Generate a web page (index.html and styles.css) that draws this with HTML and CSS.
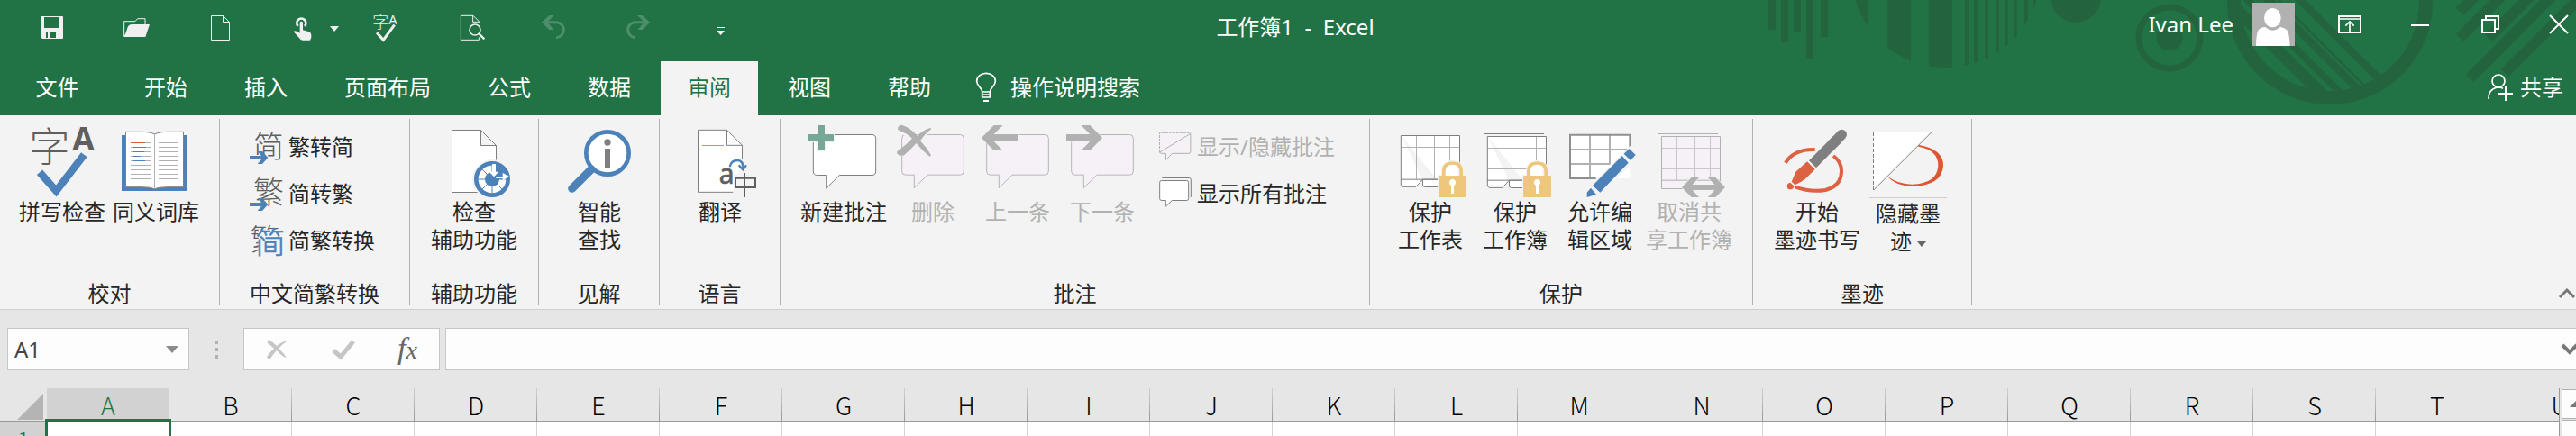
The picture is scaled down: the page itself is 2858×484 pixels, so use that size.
FILE: index.html
```html
<!DOCTYPE html>
<html lang="zh-CN">
<head>
<meta charset="utf-8">
<title>工作簿1 - Excel</title>
<link rel="stylesheet" href="styles.css">
</head>
<body>
<header class="app-header">
  <svg class="decor" width="898" height="128" viewBox="1960 0 898 128" aria-hidden="true">
    <defs>
      <clipPath id="disc"><circle cx="2159" cy="-30" r="105"/></clipPath>
      <clipPath id="ring"><circle cx="2585" cy="2" r="106"/></clipPath>
    </defs>
    <path d="M1962 0h8v33h-8zM1976 0h8v47h-8zM1990 0h8v35h-8zM2004 0h8v65h-8zM2020 0h8v41h-8z"/>
    <path clip-path="url(#disc)" d="M2050 0h22v80h-22zM2094 0h26v80h-26zM2140 0h26v80h-26zM2180 0h4v80h-4zM2190 0h4v80h-4zM2202 0h4v80h-4zM2214 0h4v80h-4zM2224 0h4v80h-4zM2234 0h4v80h-4zM2246 0h4v80h-4zM2256 0h4v80h-4z"/>
    <circle cx="2303" cy="-3" r="28"/>
    <circle cx="2407" cy="42" r="14.5"/>
    <circle class="decor-line" cx="2407" cy="42" r="34" stroke-width="7"/>
    <circle class="decor-line" cx="2585" cy="2" r="106.500" stroke-width="15"/>
    <g clip-path="url(#ring)">
      <path d="M2462 0l120 120h19L2480 0zM2488 0l120 120h11L2499 0zM2511 0l120 120h12L2523 0zM2526 0l120 120h4L2530 0zM2546 0l120 120h12L2558 0z"/>
    </g>
    <path class="decor-line" stroke-width="12" d="M2729 13l20-20M2729 42l50-50M2761 42l50-50M2740 87l100-100M2779 81l90-90"/>
  </svg>

  <div class="titlebar">
    <div class="qat" role="toolbar" aria-label="快速访问工具栏">
      <button type="button" aria-label="保存"><svg class="q" viewBox="117 42 108 108"><path fill="#f0f0f0" fill-rule="evenodd" d="M135 57q0-3 3-3h69q3 0 3 3v69q0 3-3 3h-66l-6-6zM147 57v36h51V57zM153 105v21h6v-18h9v18h18v-21z"/></svg></button>
      <button type="button" aria-label="打开"><svg class="q" viewBox="399 42 108 108"><path fill="none" stroke="#f0f0f0" stroke-width="3" d="M413 121V71h37l8-9h25v20"/><path fill="#f0f0f0" d="M412 123q8-14 12-30 3-12 16-12h58l-14 42z"/></svg></button>
      <button type="button" aria-label="新建"><svg class="q" viewBox="681 42 108 108"><path fill="none" stroke="#f0f0f0" stroke-width="3" d="M703.500 52.500h39l21 21v60h-60zM742.500 52.500v21h21"/></svg></button>
      <span class="split">
        <button type="button" aria-label="触摸/鼠标模式"><svg class="q" viewBox="954 42 108 108"><path fill="none" stroke="#f0f0f0" stroke-width="8" d="M992 87a15 15 0 1 1 22 0"/><path fill="#f0f0f0" d="M998 74q5-5 10 0v26l21 6q7 3 7 11v8l-4 9h-25q-7-1-12-9l-18-19q3-6 11-2l10 6z"/></svg></button>
        <button type="button" aria-label="更多模式"><svg width="10" height="6" viewBox="0 0 10 6"><path fill="#f0f0f0" d="M0 0h10L5 6z"/></svg></button>
      </span>
      <button type="button" aria-label="拼写检查"><svg class="q" viewBox="1230 42 108 108"><text class="glyph-zh" x="1240" y="93" font-size="54" fill="#f0f0f0">字</text><text class="glyph-en" x="1294" y="81" font-size="44" fill="#f0f0f0">A</text><path fill="none" stroke="#f0f0f0" stroke-width="9" d="M1254 109l22 24 37-50"/></svg></button>
      <button type="button" aria-label="打印预览"><svg class="q" viewBox="81 42 108 108"><path fill="none" stroke="#f0f0f0" stroke-width="3" d="M154 124v9H94V52h41l20 20v6M134 52v21h20"/><circle cx="141" cy="99" r="18" fill="#217346" stroke="#f0f0f0" stroke-width="5"/><path stroke="#f0f0f0" stroke-width="7" d="M153 111l19 19"/></svg></button>
      <button type="button" aria-label="撤消" disabled><svg class="q" viewBox="351 42 108 108"><path fill="none" stroke="#4d8f6b" stroke-width="9" d="M372 74h40a24 25 0 0 1-1 51"/><path fill="#4d8f6b" d="M363 74l25-23h16l-22 23 22 25h-16z"/></svg></button>
      <button type="button" aria-label="恢复" disabled><svg class="q" viewBox="630 42 108 108"><path fill="none" stroke="#4d8f6b" stroke-width="9" d="M714 74h-40a24 25 0 0 0 1 51"/><path fill="#4d8f6b" d="M723 74l-25-23h-16l22 23-22 25h16z"/></svg></button>
      <button type="button" aria-label="自定义快速访问工具栏"><svg class="q" viewBox="906 42 108 108"><path fill="#fff" d="M945 90h27v3h-27zM945 102h27l-13 15z"/></svg></button>
    </div>
    <h1 class="title">工作簿1&nbsp; -&nbsp; Excel</h1>
    <div class="window-side">
      <span class="user">Ivan Lee</span>
      <svg class="avatar" width="48" height="48" viewBox="0 0 144 144" role="img" aria-label="Ivan Lee"><path fill="#b1b1b1" d="M0 0h144v144H0z"/><ellipse cx="70" cy="50" rx="28" ry="32" fill="#fff"/><path fill="#fff" d="M15 144q1-50 12-57 9-7 19-6 24 22 50 0 12 1 21 9 9 8 11 54z"/></svg>
      <button class="wbtn" type="button" aria-label="功能区显示选项"><svg width="28" height="22" viewBox="645 48 84 66"><path fill="none" stroke="#fff" stroke-width="6" d="M651 54h72v54h-72z"/><path fill="none" stroke="#fff" stroke-width="5" d="M651 63h72M687 105V72M673 86l14-14 14 14"/></svg></button>
      <button class="wbtn" type="button" aria-label="最小化"><svg width="20" height="22" viewBox="0 0 20 22"><path fill="#fff" d="M0 11h20v2H0z"/></svg></button>
      <button class="wbtn" type="button" aria-label="向下还原"><svg width="20" height="20" viewBox="0 0 20 20"><path fill="none" stroke="#fff" stroke-width="2" d="M1 5h14v14H1zM5 5V1h14v14h-4"/></svg></button>
      <button class="wbtn close" type="button" aria-label="关闭"><svg width="20" height="20" viewBox="0 0 20 20"><path stroke="#fff" stroke-width="2" d="M0 0l20 20M20 0L0 20"/></svg></button>
    </div>
  </div>

  <nav class="tabs" aria-label="功能区选项卡">
    <button class="tab file" type="button">文件</button>
    <button class="tab" type="button">开始</button>
    <button class="tab" type="button">插入</button>
    <button class="tab" type="button">页面布局</button>
    <button class="tab" type="button">公式</button>
    <button class="tab" type="button">数据</button>
    <button class="tab active" type="button">审阅</button>
    <button class="tab" type="button">视图</button>
    <button class="tab" type="button">帮助</button>
    <button class="tellme" type="button"><svg width="24" height="34" viewBox="366 246 72 102"><path fill="none" stroke="#fff" stroke-width="5" d="M389 312q-1-9-9-17-9-10-9-19a31 26 0 0 1 62 0q0 9-9 19-8 8-9 17zM389 312v18h26v-18M389 321h26"/><path fill="#fff" d="M393 339h18v6h-18z"/></svg>操作说明搜索</button>
    <button class="share" type="button"><svg width="30" height="32" viewBox="1143 240 90 96"><circle cx="1182" cy="267" r="21" fill="none" stroke="#fff" stroke-width="5"/><path fill="none" stroke="#fff" stroke-width="5" d="M1149 327v-4a33 34 0 0 1 48-31"/><path stroke="#fff" stroke-width="6" d="M1182 309h48M1206 285v48"/></svg>共享</button>
  </nav>
</header>

<main class="ribbon">
  <section class="group g-proof">
    <div class="body">
      <button class="big" type="button"><svg class="i" viewBox="87 417 240 240"><text class="glyph-zh" x="97" y="539" font-size="136" fill="#5f5f5f">字</text><text class="glyph-en" x="241" y="500" font-size="106" font-weight="700" fill="#5f5f5f">A</text><path fill="none" stroke="#4c82b9" stroke-width="25" d="M132 574l55 62 93-121"/></svg><span>拼写检查</span></button>
      <button class="big" type="button"><svg class="i" viewBox="399 417 240 240"><path fill="#4c82b9" d="M405 450h219v186H405z"/><path fill="#fff" stroke="#7f7f7f" stroke-width="3" d="M418.500 439h50q32 0 46 8 14-8 46-8h50v184h-50q-32 0-46 6-14-6-46-6h-50z"/><path stroke="#b1b1b1" stroke-width="3" d="M514.500 447v182M435 475.500h66M435 490.500h66M435 505.500h66M435 520.500h66M435 535.500h66M435 550.500h66M435 565.500h66M435 580.500h66M435 595.500h66M528 475.500h66M528 490.500h66M528 505.500h66M528 520.500h66M528 535.500h66M528 550.500h66M528 565.500h66M528 580.500h66M528 595.500h66"/><path stroke="#dc5b3a" stroke-width="3" d="M435 475.500h48"/><path stroke="#4c82b9" stroke-width="3" d="M444 490.500h42M444 505.500h36M444 520.500h24M444 535.500h39"/></svg><span>同义词库</span></button>
    </div>
    <h2>校对</h2>
  </section>

  <section class="group g-convert">
    <div class="stack">
      <button class="small" type="button"><svg class="s" viewBox="828 423 120 132"><text class="glyph-zh" x="843" y="525" font-size="102" fill="#5f5f5f">简</text><path fill="none" stroke="#f3f3f3" stroke-width="18" d="M828 525h64"/><path fill="#4c82b9" d="M831 519h39l-13-15h16l19 21-19 21h-16l13-15h-39z"/></svg>繁转简</button>
      <button class="small" type="button"><svg class="s" viewBox="828 579 120 132"><text class="glyph-zh" x="843" y="679" font-size="102" fill="#5f5f5f">繁</text><path fill="none" stroke="#f3f3f3" stroke-width="18" d="M828 681h64"/><path fill="#4c82b9" d="M831 675h39l-13-15h16l19 21-19 21h-16l13-15h-39z"/></svg>简转繁</button>
      <button class="small" type="button"><svg class="s" viewBox="828 375 120 132"><text class="glyph-zh" x="833" y="474" font-size="98" fill="#5f5f5f">繁</text><path fill="#f3f3f3" d="M860 404h90v90h-90z"/><text class="glyph-zh" x="850" y="484" font-size="100" fill="#4c82b9" stroke="#4c82b9" stroke-width="2">简</text></svg>简繁转换</button>
    </div>
    <h2>中文简繁转换</h2>
  </section>

  <section class="group g-access">
    <div class="body">
      <button class="big" type="button"><svg class="i" viewBox="18 417 240 240"><path fill="#fff" stroke="#7f7f7f" stroke-width="3" d="M64.500 433.500h96l51 51v156h-147zM160.500 433.500v51h51"/><circle cx="198" cy="597" r="66" fill="#f3f3f3"/><circle cx="198" cy="597" r="53" fill="#fff" stroke="#4c82b9" stroke-width="14"/><path fill="#4c82b9" d="M198 550a47 47 0 0 1 47 47h-47z"/><circle cx="198" cy="597" r="24" fill="#4c82b9"/><path stroke="#4c82b9" stroke-width="3" d="M151 597h94M198 550v94M165 564l66 66M231 564l-66 66"/><path fill="#fff" d="M198 546h12v26h10l-16 17-16-17h10zM211 588h22v-12l21 11-21 15v-8h-22z"/></svg><span>检查<br>辅助功能</span></button>
    </div>
    <h2>辅助功能</h2>
  </section>

  <section class="group g-single">
    <div class="body">
      <button class="big" type="button"><svg class="i" viewBox="435 417 240 240"><circle cx="582" cy="510" r="71" fill="#fff" stroke="#4c82b9" stroke-width="14"/><path stroke="#4c82b9" stroke-width="27" stroke-linecap="round" d="M464 628l64-64"/><circle cx="582" cy="474" r="11" fill="#7f7f7f"/><path fill="#7f7f7f" d="M573 495h18v63h-18z"/></svg><span>智能<br>查找</span></button>
    </div>
    <h2>见解</h2>
  </section>

  <section class="group g-single">
    <div class="body">
      <button class="big" type="button"><svg class="i" viewBox="837 417 240 240"><path fill="#fff" stroke="#7f7f7f" stroke-width="3" d="M1030.500 530v-46l-51-51h-96v207h116M979.500 433v51h51"/><path stroke="#e68a45" stroke-width="3" d="M897 469.500h72M897 484.500h72M897 499.500h120"/><path fill="#f3f3f3" d="M1002 580h74v76h-74z"/><text class="glyph-en" x="953" y="611" font-size="90" fill="#5f5f5f" stroke="#5f5f5f" stroke-width="2">a</text><path fill="none" stroke="#5f5f5f" stroke-width="6" d="M1038 576v81M1008 593h66v31h-66z"/><path fill="none" stroke="#4c82b9" stroke-width="7" d="M989 556q4-22 26-22 19 0 19 30M1019 550l14 15 11-15"/></svg><span>翻译</span></button>
    </div>
    <h2>语言</h2>
  </section>

  <section class="group g-comments">
    <div class="body">
      <button class="big" type="button"><svg class="i" viewBox="1248 417 240 240"><path fill="#fff" stroke="#7f7f7f" stroke-width="3" d="M1281 448.500h181q13 0 13 13v109q0 13-13 13h-108l-44 44v-44h-30q-13 0-13-13v-109q0-13 13-13z"/><path fill="#f3f3f3" d="M1248 444h30v-30h30v30h30v30h-30v30h-30v-30h-30z"/><path fill="#77a897" d="M1251 447h30v-30h24v30h30v24h-30v30h-24v-30h-30z"/></svg><span>新建批注</span></button>
      <button class="big narrow" type="button" disabled><svg class="i" viewBox="108 417 240 240"><path class="bubble" d="M137 448.500h182q12 0 12 12v110q0 12-12 12H210l-44 44v-44h-29q-12 0-12-12v-110q0-12 12-12z"/><path stroke="#f3f3f3" stroke-width="24" d="M116 428q60 30 100 90M120 512l84-70" fill="none"/><path fill="#b1b1b1" d="M112 433q-4-14 12-17 30 8 52 37 20-21 44-27l3 4q-20 14-37 39 22 22 36 48l-4 5q-24-18-45-45-18 20-41 40-15 5-24-6 0-9 5-10 28-20 46-40-16-16-47-28z"/></svg><span>删除</span></button>
      <button class="big narrow" type="button" disabled><svg class="i" viewBox="390 417 240 240"><path class="bubble" d="M419 448.500h182q12 0 12 12v110q0 12-12 12H492l-44 44v-44h-29q-12 0-12-12v-110q0-12 12-12z"/><path fill="#b1b1b1" stroke="#f3f3f3" stroke-width="3" paint-order="stroke" d="M390 459l41-42h30l-30 30h79v24h-79l30 30h-30z"/></svg><span>上一条</span></button>
      <button class="big narrow" type="button" disabled><svg class="i" viewBox="672 417 240 240"><path class="bubble" d="M701 448.500h182q12 0 12 12v110q0 12-12 12H774l-44 44v-44h-29q-12 0-12-12v-110q0-12 12-12z"/><path fill="#b1b1b1" stroke="#f3f3f3" stroke-width="3" paint-order="stroke" d="M792 459l-41-42h-30l30 30h-79v24h79l-30 30h30z"/></svg><span>下一条</span></button>
      <div class="stack inner">
        <button class="small" type="button" disabled><svg class="s" viewBox="972 423 120 132"><path fill="#f5f1f7" d="M980 442h104v69h-62l-21 23v-23h-21z"/><path fill="none" stroke="#b1b1b1" stroke-width="3" stroke-dasharray="9 3" d="M979.500 507v-65h104"/><path fill="none" stroke="#b1b1b1" stroke-width="3" d="M979.500 507l103-62v60q0 6-6 6h-55l-21 22v-22h-15q-6 0-6-6"/></svg>显示/隐藏批注</button>
        <button class="small" type="button"><svg class="s" viewBox="972 579 120 132"><path fill="none" stroke="#7f7f7f" stroke-width="3" d="M988 592.500h90q6 0 6 6V657"/><path fill="#fff" stroke="#7f7f7f" stroke-width="3" d="M986 601.500h84q6 0 6 6v54q0 6-6 6h-49l-21 20v-20h-14q-6 0-6-6v-54q0-6 6-6z"/></svg>显示所有批注</button>
      </div>
    </div>
    <h2>批注</h2>
  </section>

  <section class="group g-protect">
    <div class="body">
      <button class="big narrow" type="button"><svg class="i" viewBox="21 87 240 240"><path fill="#fff" stroke="#7f7f7f" stroke-width="3" d="M43.500 121.500h195v146h-123v18q0 7 7 7h60M115 268l-22 24H48l-5-5V121"/><path fill="none" stroke="#b1b1b1" stroke-width="3" d="M94.500 123v144M154.500 123v144M205.500 123v144M45 160.500h192M45 229.500h192"/><path fill="none" stroke="#7f7f7f" stroke-width="3" d="M42 267.500h140"/><path fill="#f3f3f3" d="M165 252h12v-12q0-36 37-36t37 36v12h14v78h-100z"/><path fill="#fff" d="M184 207h48v48h-48z"/><path fill="none" stroke="#eec77d" stroke-width="11" d="M185.500 258v-17q0-28 29-28t29 28v17"/><rect x="168" y="255" width="93" height="72" rx="4" fill="#eec77d"/><path fill="#fff" d="M210 288a11 11 0 1 1 9 0v27h-9z"/></svg><span>保护<br>工作表</span></button>
      <button class="big narrow" type="button"><svg class="i" viewBox="303 87 240 240"><path fill="none" stroke="#7f7f7f" stroke-width="3" d="M319.500 288V115.500H519"/><path fill="#fff" stroke="#7f7f7f" stroke-width="3" d="M331.500 124.500h195v146h-123v18q0 7 7 7h60M403 271l-22 24h-45l-5-5V124"/><path fill="none" stroke="#b1b1b1" stroke-width="3" d="M382.500 126v144M442.500 126v144M493.500 126v144M333 163.500h192M333 232.500h192"/><path fill="none" stroke="#7f7f7f" stroke-width="3" d="M330 270.500h140"/><path fill="#f3f3f3" d="M447 252h12v-12q0-36 37-36t37 36v12h14v78H447z"/><path fill="#fff" d="M466 207h48v48h-48z"/><path fill="none" stroke="#eec77d" stroke-width="11" d="M467.500 258v-17q0-28 29-28t29 28v17"/><rect x="450" y="255" width="93" height="72" rx="4" fill="#eec77d"/><path fill="#fff" d="M492 288a11 11 0 1 1 9 0v27h-9z"/></svg><span>保护<br>工作簿</span></button>
      <button class="big narrow" type="button"><svg class="i" viewBox="585 87 240 240"><path fill="#fff" d="M606 119h199v145H606z"/><path fill="none" stroke="#b1b1b1" stroke-width="6" d="M672 120v144M738 120v96M606 168h199M606 216h134"/><path fill="none" stroke="#8f8f8f" stroke-width="6" d="M805 160v-41H606v145h86"/><path stroke="#f3f3f3" stroke-width="46" d="M690 304L822 172"/><path fill="#4c82b9" d="M803 165l21 21-17 18-22-22zM779 189l21 23-94 99-25-23zM675 296l18 22-31 9v-16z"/></svg><span>允许编<br>辑区域</span></button>
      <button class="big" type="button" disabled><svg class="i" viewBox="879 87 240 240"><path fill="none" stroke="#b1b1b1" stroke-width="3" d="M895.500 291V115.500H1095"/><path fill="#f5f1f7" stroke="#b1b1b1" stroke-width="3" d="M907.500 124.500h195v174h-195z"/><path fill="none" stroke="#c9c6cb" stroke-width="3" d="M958.500 126v144M1018.500 126v144M1069.500 126v144M909 163.500h192M909 232.500h192"/><path stroke="#b1b1b1" stroke-width="3" d="M909 270.500h192"/><path fill="#f3f3f3" d="M985 302h135v26H985z"/><path fill="#b1b1b1" stroke="#f3f3f3" stroke-width="4" paint-order="stroke" d="M975 294l32-33h25l-22 24h74l-22-24h25l32 33-32 33h-25l22-24h-74l22 24h-25z"/></svg><span>取消共<br>享工作簿</span></button>
    </div>
    <h2>保护</h2>
  </section>

  <section class="group g-ink">
    <div class="body">
      <button class="big" type="button"><svg class="i" viewBox="168 87 240 240"><path fill="none" stroke="#dc6242" stroke-width="12" d="M183 212q28-46 98-44M216 293q50 18 100 10 53-14 53-64 0-30-27-50"/><path stroke="#f3f3f3" stroke-width="42" d="M278 226l-46 46"/><path stroke="#7f7f7f" stroke-width="34" d="M273 217l81-82"/><circle cx="370" cy="118" r="17" fill="#7f7f7f"/><path stroke="#7f7f7f" stroke-width="34" d="M340 149l30-31"/><path fill="#dc6242" d="M255 208l26 26-31 31-15 10-20 11-12-11 14-33z"/><path fill="#dc6242" d="M199 278l13 12q-4 11-13 11-11 0-11-11 0-10 11-12z"/></svg><span>开始<br>墨迹书写</span></button>
      <button class="big hide-ink" type="button"><svg class="i" viewBox="471 87 240 240"><path fill="#dc5832" d="M625 152q84 14 83 70-4 66-104 69-56-2-84-35 36 28 84 28 83-2 87-62 1-52-66-64z"/><path fill="#fff" d="M476 109h194L476 304z"/><path stroke="#7f7f7f" stroke-width="3" d="M476 303l194-194"/><path fill="none" stroke="#7f7f7f" stroke-width="3" stroke-dasharray="12 6" d="M475.500 303V109.500H670"/></svg><span>隐藏墨<br>迹 <svg width="10" height="6" viewBox="0 0 10 6"><path fill="#666" d="M0 0h10L5 6z"/></svg></span></button>
    </div>
    <h2>墨迹</h2>
  </section>
  <button class="collapse" type="button" aria-label="折叠功能区"><svg width="18" height="12" viewBox="0 0 18 12"><path fill="none" stroke="#777" stroke-width="3" d="M1 10l8-8 8 8"/></svg></button>
</main>

<div class="formula-bar">
  <div class="name-box">
    <input type="text" value="A1" aria-label="名称框">
    <button type="button" aria-label="名称列表"><svg width="14" height="8" viewBox="0 0 14 8"><path fill="#8a8d90" d="M0 0h14L7 8z"/></svg></button>
  </div>
  <svg class="dots" width="4" height="20" viewBox="0 0 4 20" aria-hidden="true"><path fill="#b1b1b1" d="M0 0h4v4H0zM0 8h4v4H0zM0 16h4v4H0z"/></svg>
  <div class="fx-box">
    <button type="button" aria-label="取消" disabled><svg width="24" height="22" viewBox="0 0 24 22"><path fill="#c6c6c6" d="M2 0q4 2 9 7 6-5 12-6-6 4-10 9 5 4 9 10-5-1-11-8-4 4-7 9-3 1-4-2 3-5 8-9-4-4-7-6-1-3 1-4z"/></svg></button>
    <button type="button" aria-label="输入" disabled><svg width="26" height="22" viewBox="0 0 26 22"><path fill="none" stroke="#c6c6c6" stroke-width="5" d="M2 12l8 7L24 2"/></svg></button>
    <button type="button" class="fx" aria-label="插入函数"><i>f</i><i class="x">x</i></button>
  </div>
  <div class="formula">
    <input type="text" value="" aria-label="编辑栏">
    <button type="button" aria-label="展开编辑栏"><svg width="18" height="12" viewBox="0 0 18 12"><path fill="none" stroke="#777" stroke-width="4" d="M1 1l8 8 8-8"/></svg></button>
  </div>
</div>

<div class="sheet">
  <div class="cells">
    <table>
      <colgroup><col class="rowhead"><col span="21"></colgroup>
      <thead>
        <tr><th class="corner"><svg width="29" height="29" viewBox="0 0 29 29" aria-hidden="true"><path fill="#b4b4b4" d="M29 0v29H0z"/></svg></th><th class="sel">A</th><th>B</th><th>C</th><th>D</th><th>E</th><th>F</th><th>G</th><th>H</th><th>I</th><th>J</th><th>K</th><th>L</th><th>M</th><th>N</th><th>O</th><th>P</th><th>Q</th><th>R</th><th>S</th><th>T</th><th>U</th></tr>
      </thead>
      <tbody>
        <tr><th class="sel">1</th><td class="current"></td><td></td><td></td><td></td><td></td><td></td><td></td><td></td><td></td><td></td><td></td><td></td><td></td><td></td><td></td><td></td><td></td><td></td><td></td><td></td><td></td></tr>
      </tbody>
    </table>
  </div>
  <div class="scroll">
    <button type="button" aria-label="向上滚动"><svg width="14" height="7" viewBox="0 0 14 7"><path fill="#777" d="M0 7l7-7 7 7z"/></svg></button>
    <div class="thumb"></div>
  </div>
</div>
</body>
</html>
```
FILE: styles.css
```css
* { box-sizing: border-box; }

body {
  margin: 0;
  height: 100vh;
  display: flex;
  flex-direction: column;
  overflow: hidden;
  background: #e6e6e6;
  color: #262626;
  font: 400 24px/32px "Noto Sans", "Noto Sans CJK SC", sans-serif;
}

button, input {
  margin: 0;
  padding: 0;
  border: 0;
  background: none;
  color: inherit;
  font: inherit;
}

svg { display: block; flex: none; overflow: visible; }
h1, h2 { margin: 0; font: inherit; }

.glyph-zh { font-family: "Noto Sans CJK SC", sans-serif; font-weight: 300; }
.glyph-en { font-family: "Noto Sans", sans-serif; }

/* Header */
.app-header {
  position: relative;
  flex: none;
  display: flex;
  flex-direction: column;
  gap: 4px;
  overflow: hidden;
  background: #217346;
  color: #fff;
}

.decor { position: absolute; top: 0; right: 0; fill: #23643f; }
.decor-line { fill: none; stroke: #23643f; }

.titlebar {
  position: relative;
  display: grid;
  grid-template-columns: 1fr auto 1fr;
  height: 64px;
}

.qat {
  display: grid;
  grid-template-columns: 94px 94px 94px 88px 96px 98px 82px 104px 80px;
  padding-left: 10px;
}
.qat button { display: flex; align-items: center; justify-content: center; }
.q { width: 36px; height: 36px; }
.split { display: flex; padding-left: 26px; gap: 12px; }

.title { padding: 14px 0 0 16px; }

.window-side {
  display: flex;
  align-items: center;
  justify-content: flex-end;
  height: 54px;
}
.user { margin-right: 20px; }
.avatar { margin-right: 22px; }
.wbtn {
  display: flex;
  align-items: center;
  justify-content: center;
  width: 78px;
  height: 54px;
}
.close { width: 56px; justify-content: flex-end; padding-right: 9px; }

.tabs { position: relative; display: flex; gap: 3px; height: 60px; }
.tab { padding: 0 30px 2px; }
.file { width: 127px; }
.active { background: #f3f3f3; color: #217346; }
.tellme, .share { display: flex; align-items: center; padding-bottom: 2px; }
.tellme { gap: 15px; padding-left: 16px; }
.share { gap: 7px; margin-left: auto; padding-right: 14px; }

/* Ribbon */
.ribbon {
  flex: none;
  display: flex;
  padding: 4px 0;
  background: #f3f3f3;
  border-bottom: 1px solid #cfcfcf;
}
.group {
  display: flex;
  flex-direction: column;
  justify-content: space-between;
  height: 207px;
  border-right: 1px solid #b1b1b1;
}
.group h2 { text-align: center; line-height: 26px; }
.body { display: flex; gap: 2px; }
.g-proof { width: 244px; }
.g-proof .body { padding-left: 18px; }
.g-convert { width: 211px; }
.g-convert .stack { padding-left: 32px; }
.g-access { width: 143px; }
.g-access .body { padding-left: 20px; }
.g-single { width: 134px; }
.g-single .body { padding-left: 16px; }
.g-comments { width: 654px; }
.g-comments .body { padding-left: 19px; }
.g-protect { width: 425px; }
.g-protect .body { padding-left: 21px; }
.g-ink { width: 243px; }
.g-ink .body { padding-left: 20px; }

.big {
  display: flex;
  flex-direction: column;
  align-items: center;
  width: 102px;
  padding-top: 7px;
  line-height: 31px;
  white-space: nowrap;
}
.narrow { width: 92px; }
.i { width: 80px; height: 80px; }
.big:disabled, .small:disabled { color: #b1b1b1; }
.bubble { fill: #f5f1f7; stroke: #b8b5ba; stroke-width: 3px; }

.hide-ink { width: 96px; }
.hide-ink span { width: 86px; border-top: 1px solid #cfcfcf; padding-top: 1px; }
.hide-ink span svg { display: inline-block; vertical-align: middle; }

.stack { display: flex; flex-direction: column; padding-top: 5px; }
.inner { margin-left: 13px; }
.small {
  display: flex;
  align-items: center;
  gap: 4px;
  height: 52px;
  white-space: nowrap;
}
.s { width: 40px; height: 44px; }
.collapse { margin: 0 1px 7px auto; align-self: flex-end; }

/* Formula bar */
.formula-bar {
  flex: none;
  display: flex;
  align-items: center;
  padding: 20px 0 20px 8px;
}
.name-box, .fx-box, .formula {
  display: flex;
  align-items: center;
  height: 47px;
  border: 1px solid #c6c6c6;
  background: #fdfdfd;
}
.name-box { width: 202px; padding: 0 11px 0 7px; color: #444; }
.name-box input { flex: 1; min-width: 0; }
.dots { margin: 0 28px; }
.fx-box { width: 218px; padding: 0 24px 0 25px; justify-content: space-between; }
.fx { font: italic 34px/40px "Liberation Serif", serif; color: #666; display: flex; align-items: baseline; }
.x { font-size: 28px; }
.formula { flex: 1; min-width: 0; margin-left: 6px; border-right: 0; overflow: hidden; }
.formula input { flex: 1; min-width: 0; height: 100%; padding: 0 8px; }
.formula button { margin-right: -2px; }

/* Sheet */
.sheet { flex: 1; min-height: 0; display: flex; gap: 2px; overflow: hidden; }
.cells { flex: 1; min-width: 0; overflow: hidden; border-right: 1px solid #999; }
.cells table { width: 2908px; table-layout: fixed; border-collapse: separate; border-spacing: 0; }
.cells col { width: 136px; }
.cells .rowhead { width: 52px; }
.cells th {
  height: 37px;
  padding: 2px 0 0;
  border-bottom: 1px solid #999;
  background: linear-gradient(#cfcfcf, #999) right / 1px 100% no-repeat #e6e6e6;
  color: #000;
  font: 300 27px/34px "Noto Sans CJK SC", sans-serif;
}
.cells thead .corner { padding: 4px 0 0 19px; background: #e6e6e6; }
.cells thead .sel, .cells tbody .sel { background-color: #d2d2d2; color: #217346; }
.cells tbody .sel { padding-top: 4px; }
.cells td { height: 39px; padding: 0; border-right: 1px solid #d4d4d4; background: #fff; }
.current { position: relative; }
.current::after {
  content: "";
  position: absolute;
  inset: -3px -3px -2px -2px;
  border: 3px solid #217346;
}

.scroll { width: 16px; display: flex; flex-direction: column; gap: 1px; padding-top: 1px; overflow: hidden; }
.scroll button {
  height: 33px;
  padding-left: 8px;
  border: 1px solid #b1b1b1;
  border-right: 0;
  background: #fdfdfd;
}
.thumb { flex: 1; border: 1px solid #b1b1b1; border-width: 1px 0 0 1px; background: #fdfdfd; }
```
